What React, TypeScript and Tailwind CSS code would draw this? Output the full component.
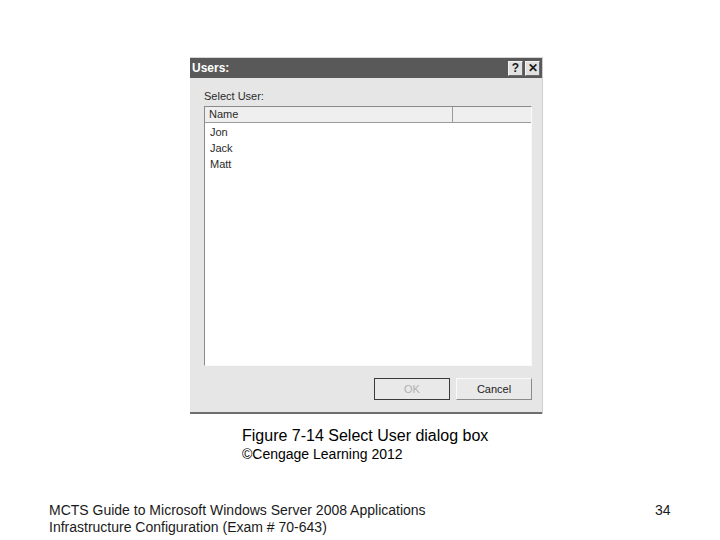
import React from 'react';

const users = ['Jon', 'Jack', 'Matt'];

const TitleButton: React.FC<{ children: React.ReactNode }> = ({ children }) => (
  <div className="w-[15px] h-[15px] bg-[#e2e2e2] border border-t-[#f4f4f4] border-l-[#f4f4f4] border-r-[#6a6a6a] border-b-[#6a6a6a] flex items-center justify-center text-[12px] font-bold leading-none text-[#1a1a1a]">
    {children}
  </div>
);

const DialogButton: React.FC<{ label: string; disabled?: boolean; focused?: boolean }> = ({ label, disabled, focused }) => (
  <div
    className={`w-[76px] h-[22px] flex items-center justify-center text-[11px] bg-[#e9e9e9] ${
      focused
        ? 'border border-[#3a3a3a]'
        : 'border border-t-[#fafafa] border-l-[#fafafa] border-r-[#8a8a8a] border-b-[#8a8a8a]'
    } ${disabled ? 'text-[#b0b0b0]' : 'text-[#222]'}`}
  >
    {label}
  </div>
);

export default function App() {
  return (
    <div className="w-[720px] h-[540px] bg-white flex flex-col" style={{ fontFamily: '"Liberation Sans", Arial, sans-serif' }}>
      {/* Dialog */}
      <div className="mt-[57px] ml-[190px] w-[353px] border-t border-[#d6d6d6] border-r border-r-[#cfcfcf]">
        <div className="h-[20px] bg-[#595959] flex items-center justify-between pl-[2px] pr-[2px]">
          <span className="text-white font-bold text-[12px] leading-none">Users:</span>
          <div className="flex gap-[2px]">
            <TitleButton>?</TitleButton>
            <TitleButton>✕</TitleButton>
          </div>
        </div>
        <div className="bg-[#e6e6e6] pt-[12px] pb-[12px] pl-[14px] pr-[10px]">
          <div className="text-[11px] leading-[13px] text-[#2a2a2a]">Select User:</div>
          <div className="mt-[3px] w-[328px] h-[260px] bg-white border border-t-[#8a8a8a] border-l-[#8a8a8a] border-r-[#fafafa] border-b-[#fafafa]">
            <div className="flex h-[16px] bg-[#efefef] border-b border-[#9a9a9a] text-[11px] text-[#2a2a2a]">
              <div className="w-[248px] border-r border-[#9a9a9a] pl-[4px] leading-[15px]">Name</div>
              <div className="flex-1" />
            </div>
            <div className="pt-[1px]">
              {users.map((u) => (
                <div key={u} className="h-[16px] pl-[5px] text-[11px] leading-[16px] text-[#2a2a2a]">
                  {u}
                </div>
              ))}
            </div>
          </div>
          <div className="mt-[12px] flex justify-end gap-[6px]">
            <DialogButton label="OK" disabled focused />
            <DialogButton label="Cancel" />
          </div>
        </div>
        <div className="h-[2px] bg-[#6e6e6e]" />
      </div>

      {/* Caption */}
      <div className="ml-[242px] mt-[13px] text-[16px] leading-[18px] text-black">Figure 7-14 Select User dialog box</div>
      <div className="ml-[242px] mt-[1px] text-[14px] leading-[17px] text-black">©Cengage Learning 2012</div>

      {/* Footer */}
      <div className="mt-auto mb-[4px] flex items-start pl-[49px] text-[14px] leading-[17px] text-[#1a1a1a]">
        <div className="w-[606px]">
          <div>MCTS Guide to Microsoft Windows Server 2008 Applications</div>
          <div>Infrastructure Configuration (Exam # 70-643)</div>
        </div>
        <div>34</div>
      </div>
    </div>
  );
}
